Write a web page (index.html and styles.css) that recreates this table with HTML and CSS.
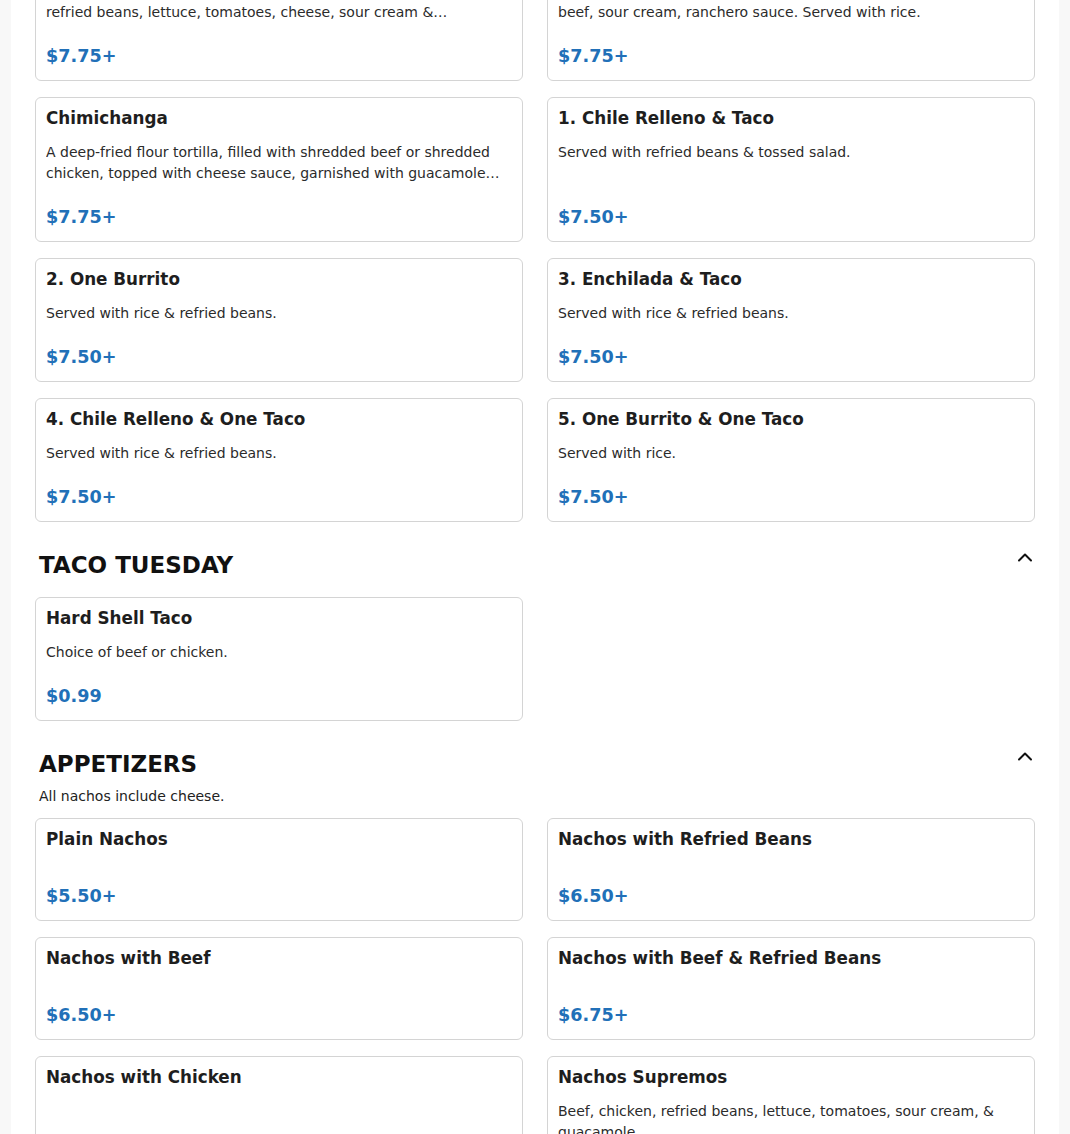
FILE: index.html
```html
<!DOCTYPE html>
<html lang="en">
<head>
<meta charset="utf-8">
<title>Menu</title>
<link rel="stylesheet" href="styles.css">
</head>
<body>
<main class="panel">
  <section class="section section-first">
    <div class="grid">
      <article class="card">
        <h3 class="card-title">Taco Salad</h3>
        <p class="card-desc">A crispy flour tortilla shell filled with beef or chicken, rice,<br>refried beans, lettuce, tomatoes, cheese, sour cream &amp; guacamole.</p>
        <div class="card-price">$7.75+</div>
      </article>
      <article class="card">
        <h3 class="card-title">Enchiladas Rancheras</h3>
        <p class="card-desc">Three cheese enchiladas topped with lettuce, tomatoes, shredded<br>beef, sour cream, ranchero sauce. Served with rice.</p>
        <div class="card-price">$7.75+</div>
      </article>
      <article class="card">
        <h3 class="card-title">Chimichanga</h3>
        <p class="card-desc">A deep-fried flour tortilla, filled with shredded beef or shredded chicken, topped with cheese sauce, garnished with guacamole and sour cream. Served with rice &amp; refried beans.</p>
        <div class="card-price">$7.75+</div>
      </article>
      <article class="card">
        <h3 class="card-title">1. Chile Relleno &amp; Taco</h3>
        <p class="card-desc">Served with refried beans &amp; tossed salad.</p>
        <div class="card-price">$7.50+</div>
      </article>
      <article class="card">
        <h3 class="card-title">2. One Burrito</h3>
        <p class="card-desc">Served with rice &amp; refried beans.</p>
        <div class="card-price">$7.50+</div>
      </article>
      <article class="card">
        <h3 class="card-title">3. Enchilada &amp; Taco</h3>
        <p class="card-desc">Served with rice &amp; refried beans.</p>
        <div class="card-price">$7.50+</div>
      </article>
      <article class="card">
        <h3 class="card-title">4. Chile Relleno &amp; One Taco</h3>
        <p class="card-desc">Served with rice &amp; refried beans.</p>
        <div class="card-price">$7.50+</div>
      </article>
      <article class="card">
        <h3 class="card-title">5. One Burrito &amp; One Taco</h3>
        <p class="card-desc">Served with rice.</p>
        <div class="card-price">$7.50+</div>
      </article>
    </div>
  </section>

  <section class="section">
    <header class="section-head">
      <h2 class="section-title">TACO TUESDAY</h2>
      <svg class="chevron" width="16" height="16" viewBox="0 0 16 16" aria-hidden="true"><path d="M2 9.5 L8 3.5 L14 9.5" fill="none" stroke="#111" stroke-width="2" stroke-linecap="round" stroke-linejoin="round"/></svg>
    </header>
    <div class="grid grid-after-head">
      <article class="card">
        <h3 class="card-title">Hard Shell Taco</h3>
        <p class="card-desc">Choice of beef or chicken.</p>
        <div class="card-price">$0.99</div>
      </article>
    </div>
  </section>

  <section class="section">
    <header class="section-head">
      <h2 class="section-title">APPETIZERS</h2>
      <svg class="chevron" width="16" height="16" viewBox="0 0 16 16" aria-hidden="true"><path d="M2 9.5 L8 3.5 L14 9.5" fill="none" stroke="#111" stroke-width="2" stroke-linecap="round" stroke-linejoin="round"/></svg>
    </header>
    <p class="section-note">All nachos include cheese.</p>
    <div class="grid grid-after-note">
      <article class="card">
        <h3 class="card-title">Plain Nachos</h3>
        <div class="card-price">$5.50+</div>
      </article>
      <article class="card">
        <h3 class="card-title">Nachos with Refried Beans</h3>
        <div class="card-price">$6.50+</div>
      </article>
      <article class="card">
        <h3 class="card-title">Nachos with Beef</h3>
        <div class="card-price">$6.50+</div>
      </article>
      <article class="card">
        <h3 class="card-title">Nachos with Beef &amp; Refried Beans</h3>
        <div class="card-price">$6.75+</div>
      </article>
      <article class="card">
        <h3 class="card-title">Nachos with Chicken</h3>
        <div class="card-price">$6.50+</div>
      </article>
      <article class="card">
        <h3 class="card-title">Nachos Supremos</h3>
        <p class="card-desc">Beef, chicken, refried beans, lettuce, tomatoes, sour cream, &amp; guacamole.</p>
        <div class="card-price">$8.50+</div>
      </article>
    </div>
  </section>
</main>
</body>
</html>
```

FILE: styles.css
```css
* {
  box-sizing: border-box;
}

html,
body {
  margin: 0;
  padding: 0;
}

body {
  background: #f8f8f8;
  font-family: "DejaVu Sans", "Liberation Sans", sans-serif;
  color: #222;
  overflow: hidden;
}

.panel {
  margin: 0 11px;
  padding: 0 24px 40px;
  background: #fff;
  min-height: 100vh;
}

.section-first {
  margin-top: -64px;
}

.section + .section {
  padding-top: 27px;
}

.section-head {
  display: flex;
  justify-content: space-between;
  align-items: flex-start;
  padding: 0 2px 0 4px;
}

.section-title {
  margin: 0;
  font-size: 23px;
  line-height: 32px;
  font-weight: 700;
  color: #111;
}

.chevron {
  margin-top: 2px;
  flex: none;
}

.section-note {
  margin: 6px 0 0;
  padding-left: 4px;
  font-size: 14px;
  line-height: 21px;
  color: #222;
}

.grid {
  display: grid;
  grid-template-columns: 1fr 1fr;
  column-gap: 24px;
  row-gap: 16px;
}

.grid-after-head {
  margin-top: 16px;
}

.grid-after-note {
  margin-top: 11px;
}

.card {
  display: flex;
  flex-direction: column;
  border: 1px solid #d4d4d4;
  border-radius: 6px;
  padding: 8px 10px 10px;
  background: #fff;
}

.card-title {
  margin: 0 0 12px;
  font-size: 16.8px;
  line-height: 24px;
  font-weight: 700;
  color: #1e1e1e;
}

.card-desc {
  margin: 0;
  font-size: 14px;
  line-height: 21px;
  color: #2b2b2b;
  display: -webkit-box;
  -webkit-box-orient: vertical;
  -webkit-line-clamp: 2;
  overflow: hidden;
}

.card-price {
  margin-top: auto;
  padding-top: 20px;
  font-size: 17.6px;
  line-height: 27px;
  font-weight: 700;
  color: #2170b8;
}
```
